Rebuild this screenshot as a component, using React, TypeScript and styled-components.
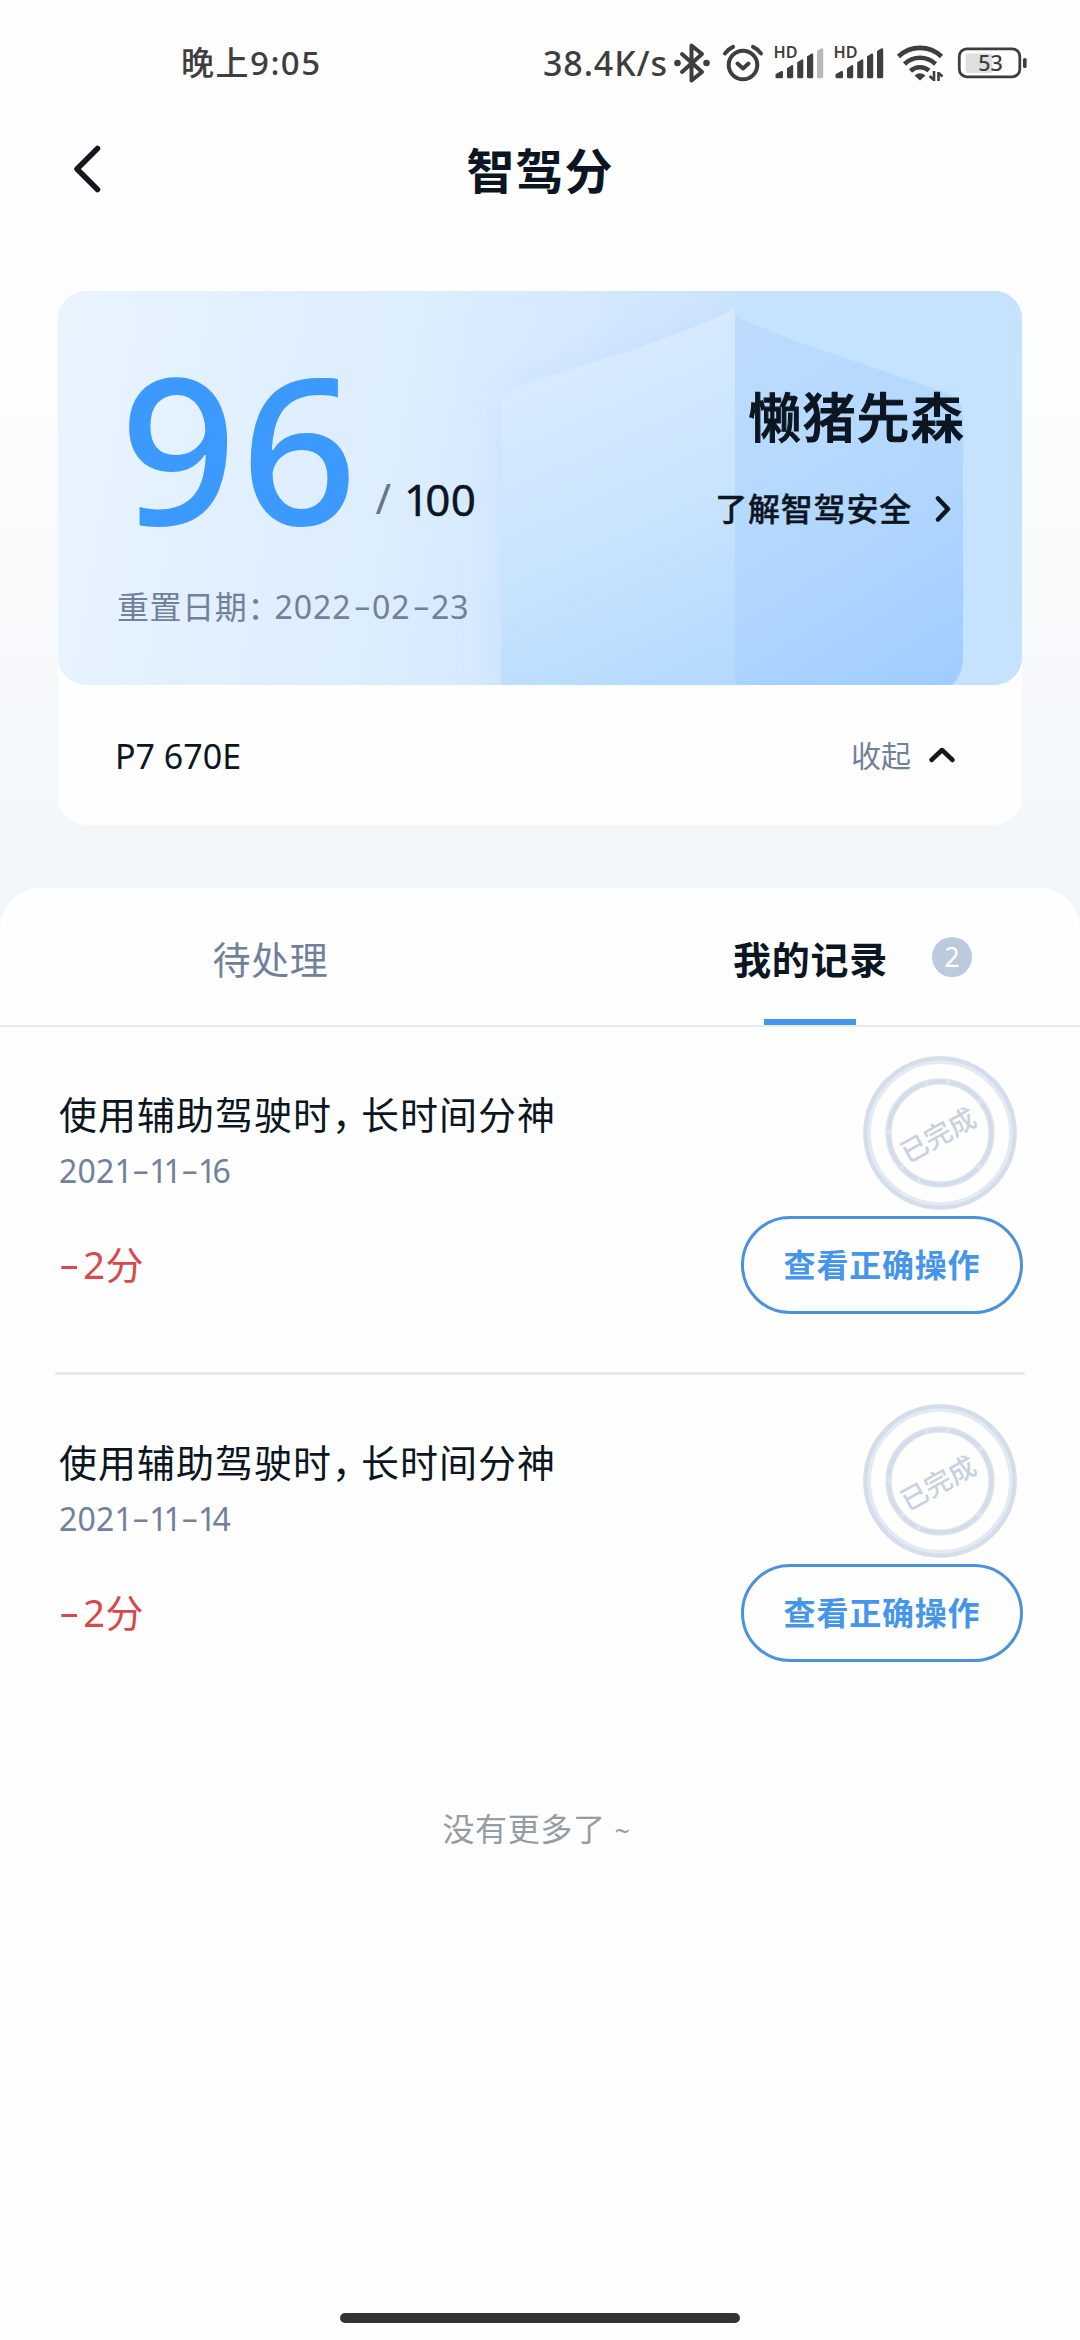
import React from "react";
import styled, { createGlobalStyle } from "styled-components";

const GlobalStyle = createGlobalStyle`
  *, *::before, *::after { box-sizing: border-box; }
  html, body { margin: 0; padding: 0; background: #fefefe; }
  body { font-family: "Noto Sans", "Noto Sans CJK SC", sans-serif; }
`;

const ink = "#0c1622";
const slate = "#72819b";
const blue = "#4596ea";
const status = "#3e3e3f";

const Screen = styled.div`
  width: 1080px;
  height: 2340px;
  display: flex;
  flex-direction: column;
  overflow: hidden;
  color: ${ink};
  background: linear-gradient(180deg, #fefefe 0, #fefefe 270px, #f2f6f9 880px, #f2f6f9 1000px);
  white-space: nowrap;
`;

const StatusBar = styled.header`
  height: 124px;
  flex: none;
  display: flex;
  align-items: center;
  padding: 1px 52px 0 181px;
  color: ${status};
`;

const Clock = styled.div`
  font-size: 33px;
  line-height: 48px;
  font-weight: 500;
  letter-spacing: 1.5px;
`;

const StatusIcons = styled.div`
  margin-left: auto;
  display: flex;
  align-items: center;
`;

const Speed = styled.span`
  font-size: 34px;
  line-height: 48px;
  font-weight: 500;
  letter-spacing: 0.9px;
  margin-right: 6px;
`;

const Glyph = styled.svg<{ $gap?: number }>`
  display: block;
  flex: none;
  overflow: visible;
  margin-left: ${(p) => p.$gap ?? 0}px;
`;

const NavBar = styled.nav`
  height: 167px;
  flex: none;
  display: grid;
  grid-template-columns: 140px 1fr 140px;
  align-items: start;
  padding-top: 11px;
`;

const BackButton = styled.button`
  height: 68px;
  border: 0;
  background: none;
  padding: 0 0 0 73px;
  display: flex;
  align-items: center;
`;

const Title = styled.h1`
  margin: 0;
  font-size: 48px;
  line-height: 72px;
  font-weight: 700;
  letter-spacing: 1px;
  text-align: center;
`;

const Card = styled.section`
  width: 964px;
  height: 534px;
  flex: none;
  margin: 0 0 63px 58px;
  border-radius: 28px;
  background: #fefefe;
`;

const Hero = styled.div`
  position: relative;
  height: 394px;
  border-radius: 28px;
  overflow: hidden;
  display: flex;
  justify-content: space-between;
  padding: 0 57px 0 59px;
  background: linear-gradient(100deg, #e9f4ff 0%, #dcedfe 36%, #d2e6fe 56%, #c7e3fe 75%, #c1dffe 100%);
`;

const HeroArt = styled.svg`
  position: absolute;
  inset: 0;
`;

const ScoreColumn = styled.div`
  position: relative;
  display: flex;
  flex-direction: column;
`;

const ScoreLine = styled.div`
  display: flex;
  align-items: flex-end;
  height: 280px;
  padding-left: 3px;
`;

const Score = styled.span`
  font-size: 204px;
  line-height: 250px;
  font-weight: 500;
  letter-spacing: 4px;
  color: #3c99fd;
`;

const Slash = styled.span`
  font-size: 42px;
  line-height: 60px;
  color: #677587;
  margin: 0 13px 43px 14px;
`;

const Total = styled.span`
  font-size: 44px;
  line-height: 60px;
  letter-spacing: 0.3px;
  margin-bottom: 42px;
  -webkit-text-stroke: 0.4px currentColor;
`;

const ResetDate = styled.div`
  margin-top: 12px;
  font-size: 32px;
  line-height: 48px;
  color: ${slate};
`;

const Label = styled.span<{ $spacing?: number }>`
  letter-spacing: ${(p) => p.$spacing ?? 0}px;
`;

const DateRun = styled.span<{ $spacing: number }>`
  letter-spacing: ${(p) => p.$spacing}px;
`;

const NarrowOne = styled.span`
  letter-spacing: -4px;
`;

const Dash = styled.span<{ $gap?: number; $shift?: number }>`
  display: inline-block;
  letter-spacing: 0;
  transform: translate(${(p) => p.$shift ?? 0}px, -1px) scaleX(1.7);
  margin: 0 ${(p) => p.$gap ?? 5}px;
`;

const OwnerColumn = styled.div`
  position: relative;
  display: flex;
  flex-direction: column;
  align-items: flex-end;
  padding-top: 87px;
`;

const Owner = styled.div`
  font-size: 53px;
  line-height: 80px;
  font-weight: 500;
  letter-spacing: 1.2px;
  -webkit-text-stroke: 1.1px currentColor;
`;

const SafetyLink = styled.a`
  display: flex;
  align-items: center;
  margin-top: 27px;
  padding-right: 12px;
  font-size: 32px;
  line-height: 48px;
  font-weight: 500;
  letter-spacing: 0.8px;
  -webkit-text-stroke: 0.4px currentColor;
`;

const VehicleRow = styled.div`
  height: 140px;
  display: flex;
  align-items: center;
  justify-content: space-between;
  padding: 2px 66px 0 57px;
`;

const Vehicle = styled.span`
  font-size: 34px;
  line-height: 48px;
`;

const Collapse = styled.button`
  border: 0;
  background: none;
  padding: 0;
  display: flex;
  align-items: center;
  font: inherit;
  font-size: 30px;
  line-height: 48px;
  color: ${slate};
`;

const Sheet = styled.main`
  flex: 1;
  display: flex;
  flex-direction: column;
  border-radius: 40px 40px 0 0;
  background: #fefefe;
`;

const Tabs = styled.div`
  height: 139px;
  flex: none;
  display: grid;
  grid-template-columns: 1fr 1fr;
  border-bottom: 2px solid #e8ebed;
`;

const Tab = styled.div<{ $active?: boolean }>`
  position: relative;
  display: flex;
  justify-content: center;
  padding: 43px 0 0 1px;
  font-size: 38px;
  line-height: 56px;
  letter-spacing: 0.7px;
  font-weight: ${(p) => (p.$active ? 700 : 400)};
  color: ${(p) => (p.$active ? ink : slate)};
  &::after {
    content: "";
    display: ${(p) => (p.$active ? "block" : "none")};
    position: absolute;
    left: 50%;
    bottom: 0;
    width: 92px;
    height: 6px;
    margin-left: -46px;
    background: ${blue};
  }
`;

const Badge = styled.span`
  position: absolute;
  left: 392px;
  top: 49px;
  width: 40px;
  height: 40px;
  border-radius: 50%;
  background: #bccadd;
  color: #fff;
  font-size: 27px;
  line-height: 40px;
  font-weight: 400;
  letter-spacing: 0;
  text-align: center;
`;

const Record = styled.article<{ $last?: boolean }>`
  height: 348px;
  flex: none;
  margin: 0 55px;
  padding: 0 2px 0 4px;
  display: flex;
  justify-content: space-between;
  border-bottom: 3px solid ${(p) => (p.$last ? "transparent" : "#e8ebec")};
`;

const RecordInfo = styled.div`
  display: flex;
  flex-direction: column;
  padding-top: 59px;
`;

const RecordTitle = styled.h2`
  margin: 0;
  font-size: 38px;
  line-height: 56px;
  font-weight: 400;
  letter-spacing: 1px;
`;

const RecordDate = styled.div`
  margin-top: 5px;
  font-size: 32px;
  line-height: 48px;
  color: ${slate};
`;

const Deduction = styled.div`
  margin-top: 41px;
  font-size: 38px;
  line-height: 56px;
  letter-spacing: 0.6px;
  color: #d9484b;
`;

const RecordActions = styled.div`
  display: flex;
  flex-direction: column;
  align-items: flex-end;
  padding-top: 28px;
`;

const Stamp = styled.svg`
  display: block;
  margin: 0 5px 5px 0;
`;

const GuideButton = styled.button`
  width: 282px;
  height: 98px;
  padding: 0;
  border: 3px solid #4a92dc;
  border-radius: 49px;
  background: transparent;
  font: inherit;
  font-size: 32px;
  line-height: 48px;
  font-weight: 700;
  letter-spacing: 0.8px;
  color: ${blue};
`;

const EndNote = styled.p`
  margin: 82px 0 0;
  padding-right: 7px;
  text-align: center;
  font-size: 32px;
  line-height: 48px;
  letter-spacing: 0.6px;
  color: #969ca3;
`;

const Tilde = styled.span`
  font-size: 27px;
`;

const HomeIndicator = styled.div`
  width: 400px;
  height: 10px;
  margin: auto auto 17px;
  border-radius: 5px;
  background: #333;
`;

const SignalBars = ({ dimLast, gap }: { dimLast?: boolean; gap: number }) => (
  <Glyph width="50" height="36" viewBox="0 0 50 36" $gap={gap} fill={status}>
    <text x="-0.5" y="13" fontSize="15.5" fontWeight="600" fontFamily="Noto Sans, sans-serif" textLength="24" lengthAdjust="spacingAndGlyphs">HD</text>
    <g transform="translate(0 -1.700)">
      <path d="M1.500 31 7.300 27.800Q9 27.300 9 29v4.500q0 1.500-1.500 1.500H3q-1.500 0-1.500-1.500Z" />
      <path d="M13 25 17.600 21.900Q19.200 21.400 19.200 23v10.500q0 1.500-1.500 1.500h-3.200q-1.500 0-1.500-1.500Z" />
      <path d="M23.200 19 27.800 16.100Q29.300 15.600 29.300 17.200v16.300q0 1.500-1.500 1.500h-3.100q-1.500 0-1.500-1.500Z" />
      <path d="M33 13.200 37.600 10.300Q39.200 9.900 39.200 11.700v21.800q0 1.500-1.500 1.500h-3.200Q33 35 33 33.500Z" />
      <path d="M43 7.800 47.600 5Q49.200 4.600 49.200 6.400v27.100q0 1.500-1.500 1.500h-3.200Q43 35 43 33.500Z" fill={dimLast ? "#b9b9b9" : status} />
    </g>
  </Glyph>
);

const DateText = ({ value, spacing, shift }: { value: string; spacing: number; shift?: number }) => (
  <DateRun $spacing={spacing}>
    {value.split("").map((ch, i) => {
      if (ch === "-") return <Dash key={i} $shift={shift}>-</Dash>;
      if (ch === "1") return <NarrowOne key={i}>1</NarrowOne>;
      return <React.Fragment key={i}>{ch}</React.Fragment>;
    })}
  </DateRun>
);

const CompletedStamp = () => (
  <Stamp width="156" height="156" viewBox="0 0 156 156" fill="none">
    <circle cx="78" cy="78" r="73" stroke="#e4eaf3" strokeWidth="8" />
    <circle cx="78" cy="78" r="74.500" stroke="#d6ddea" strokeWidth="4" />
    <circle cx="78" cy="78" r="51.500" stroke="#e0e6f0" strokeWidth="6.500" />
    <circle cx="78" cy="78" r="51.500" stroke="#d5dce9" strokeWidth="4" strokeDasharray="34 5 62 3 18 4" />
    <text x="76" y="90" textAnchor="middle" fontSize="27" fontWeight="500" fill="#c9d1de" fontFamily="Noto Sans CJK SC, sans-serif" transform="rotate(-29 76 80)">
      已完成
    </text>
  </Stamp>
);

const records = [
  { date: "2021-11-16", points: 2 },
  { date: "2021-11-14", points: 2 },
];

export default function App() {
  return (
    <>
      <GlobalStyle />
      <Screen>
        <StatusBar>
          <Clock>晚上9:05</Clock>
          <StatusIcons>
            <Speed>38.4K/s</Speed>
            <Glyph width="36" height="40" viewBox="0 0 36 40" fill="none" stroke={status} strokeWidth="4" strokeLinejoin="round" strokeLinecap="round">
              <path d="M8 11 28 29 17.500 37.500V2.500L28 11 8 29" />
              <circle cx="3.500" cy="20" r="3.300" fill={status} stroke="none" />
              <circle cx="32.500" cy="20" r="3.300" fill={status} stroke="none" />
            </Glyph>
            <Glyph $gap={13} width="40" height="38" viewBox="0 0 40 38" fill="none" stroke={status} strokeWidth="4" strokeLinecap="round">
              <circle cx="20" cy="21" r="14.300" />
              <path d="M2 9.500Q5 5 10 2.800M38 9.500Q35 5 30 2.800" />
              <path d="m14.500 19.500 5.500 5 5.500-5" strokeLinejoin="round" />
            </Glyph>
            <SignalBars dimLast gap={11} />
            <SignalBars gap={10} />
            <Glyph $gap={13} width="46" height="36" viewBox="0 0 46 36" fill="none" stroke={status} strokeWidth="4.600">
              <path d="M1.500 11.500a31 31 0 0 1 43 0" />
              <path d="M7.500 19a22.500 22.500 0 0 1 31 0" />
              <path d="M13.500 26a14 14 0 0 1 18.500-.5" />
              <path d="M17.500 30.500q5.500-4.500 11 0L23 35.500Z" fill={status} stroke="none" />
              <path d="M37 26v10M41.500 27v9M32.500 31l4.500 4M41.500 28l4 3.500" strokeWidth="2.600" />
            </Glyph>
            <Glyph $gap={15} width="70" height="32" viewBox="0 0 70 32" fill="none">
              <rect x="7.500" y="6.500" width="27" height="19.500" rx="3" fill="#dfdfdf" />
              <rect x="1.300" y="1.800" width="60.500" height="28" rx="7.500" stroke={status} strokeWidth="2.800" />
              <rect x="65" y="11" width="3.600" height="10" rx="1.600" fill={status} />
              <text x="32.500" y="23.500" textAnchor="middle" fontSize="21.500" fontWeight="500" fill={status} fontFamily="Noto Sans, sans-serif">53</text>
            </Glyph>
          </StatusIcons>
        </StatusBar>

        <NavBar>
          <BackButton aria-label="back">
            <Glyph width="28" height="48" viewBox="0 0 28 48" fill="none" stroke="#15181d" strokeWidth="5.500" strokeLinecap="round" strokeLinejoin="round">
              <path d="M24.500 3.500 4 24l20.500 20.500" />
            </Glyph>
          </BackButton>
          <Title>智驾分</Title>
        </NavBar>

        <Card>
          <Hero>
            <HeroArt width="964" height="394" viewBox="0 0 964 394" fill="none">
              <defs>
                <linearGradient id="faceLeft" gradientUnits="userSpaceOnUse" x1="530" y1="60" x2="680" y2="394">
                  <stop offset="0" stopColor="#d8eafe" />
                  <stop offset="0.450" stopColor="#cae4fe" />
                  <stop offset="1" stopColor="#b2d9fe" />
                </linearGradient>
                <linearGradient id="faceRight" gradientUnits="userSpaceOnUse" x1="690" y1="60" x2="900" y2="394">
                  <stop offset="0" stopColor="#bcdbfe" />
                  <stop offset="0.500" stopColor="#b2d7fe" />
                  <stop offset="1" stopColor="#a0ccfe" />
                </linearGradient>
                <filter id="soften" x="-20%" y="-20%" width="140%" height="140%">
                  <feGaussianBlur stdDeviation="16" />
                </filter>
              </defs>
              <path d="M440 430V130L460 94 575 56 676 14V430Z" fill="#c3dcff" opacity="0.550" filter="url(#soften)" />
              <path d="M676 0H964V394H676Z" fill="#c5e2fe" />
              <path d="M443 394V112Q443 102 455 98L487 86 575 59 636 36 667 23Q673 20 677 14V394Z" fill="url(#faceLeft)" />
              <path d="M677 24 690 31 740 51 805 73 881 99Q905 106 905 124V366Q905 384 894 394H677Z" fill="url(#faceRight)" />
            </HeroArt>
            <ScoreColumn>
              <ScoreLine>
                <Score>96</Score>
                <Slash>/</Slash>
                <Total>
                  <NarrowOne>1</NarrowOne>00
                </Total>
              </ScoreLine>
              <ResetDate>
                <Label $spacing={0.6}>重置日期</Label>
                <Label $spacing={-5}>：</Label>
                <DateText value="2022-02-23" spacing={1} />
              </ResetDate>
            </ScoreColumn>
            <OwnerColumn>
              <Owner>懒猪先森</Owner>
              <SafetyLink>
                了解智驾安全
                <Glyph $gap={22} width="19" height="28" viewBox="0 0 19 28" fill="none" stroke={ink} strokeWidth="4.500" strokeLinecap="round" strokeLinejoin="round">
                  <path d="M4 3.500 14 14 4 24.500" />
                </Glyph>
              </SafetyLink>
            </OwnerColumn>
          </Hero>
          <VehicleRow>
            <Vehicle>P7 670E</Vehicle>
            <Collapse>
              收起
              <Glyph $gap={17} width="28" height="18" viewBox="0 0 28 18" fill="none" stroke="#14181d" strokeWidth="4.500" strokeLinecap="round" strokeLinejoin="round">
                <path d="M3.500 13 14 3l10.500 10" />
              </Glyph>
            </Collapse>
          </VehicleRow>
        </Card>

        <Sheet>
          <Tabs>
            <Tab>待处理</Tab>
            <Tab $active>
              我的记录
              <Badge>2</Badge>
            </Tab>
          </Tabs>
          {records.map((r, i) => (
            <Record key={r.date} $last={i === records.length - 1}>
              <RecordInfo>
                <RecordTitle>
                  使用辅助驾驶时<Label $spacing={-9}>，</Label>长时间分神
                </RecordTitle>
                <RecordDate>
                  <DateText value={r.date} spacing={0.2} shift={1.5} />
                </RecordDate>
                <Deduction>
                  <Dash $gap={6} $shift={-2}>-</Dash>
                  {r.points}分
                </Deduction>
              </RecordInfo>
              <RecordActions>
                <CompletedStamp />
                <GuideButton>查看正确操作</GuideButton>
              </RecordActions>
            </Record>
          ))}
          <EndNote>
            没有更多了 <Tilde>~</Tilde>
          </EndNote>
          <HomeIndicator />
        </Sheet>
      </Screen>
    </>
  );
}
